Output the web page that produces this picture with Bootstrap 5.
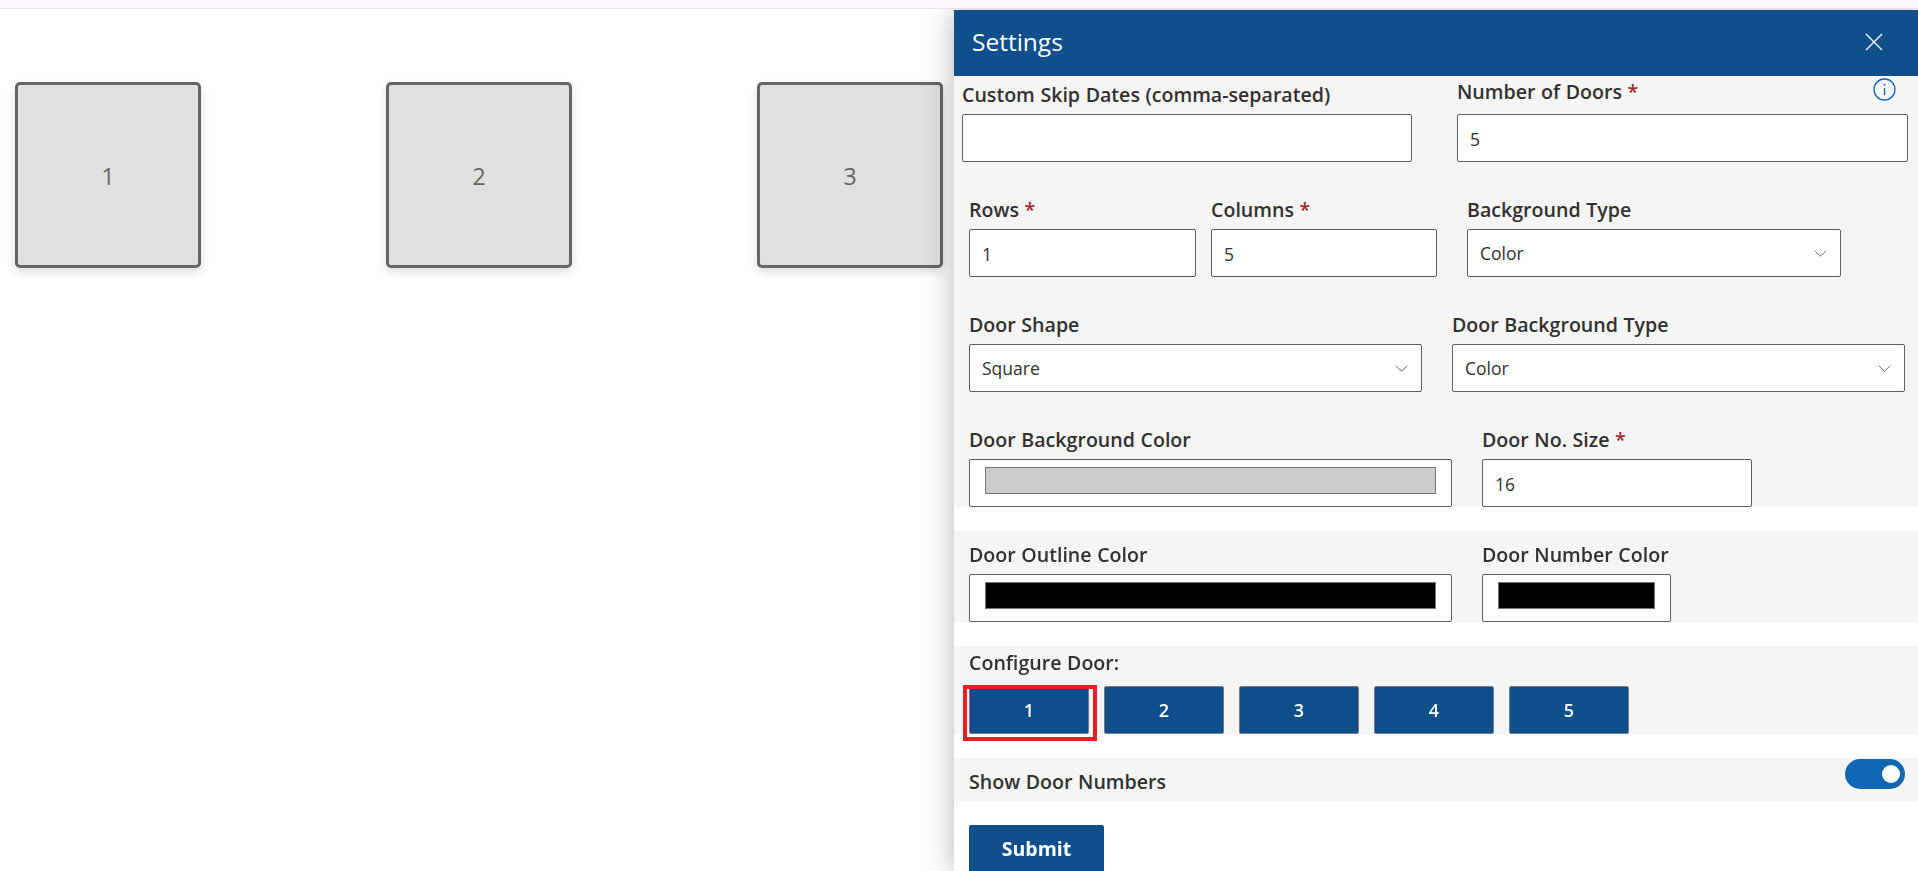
<!DOCTYPE html>
<html lang="en">
<head>
  <meta charset="UTF-8" />
  <meta name="viewport" content="width=device-width, initial-scale=1.0">
  <title>Settings</title>
  <link href="https://cdn.jsdelivr.net/npm/bootstrap@5.3.3/dist/css/bootstrap.min.css" rel="stylesheet">
  <style>
    html, body { height: 100%; }
    body { font-family: "Open Sans", "Noto Sans", sans-serif; color: #323130; background: #fff; overflow: hidden; }
    .top-strip { height: 9px; background: #fdf6fd; border-bottom: 1px solid #e9e1eb; position: relative; z-index: 3; }
    .door-stage { padding: 73px 0 0 15px; gap: 185px; }
    .door-tile { width: 186px; height: 186px; background: #e0e0e0; border: 3px solid #666; border-radius: 5px; box-shadow: 0 4px 10px rgba(0,0,0,.14); color: #666; font-size: 23px; font-weight: 400; padding-top: 2px; }

    .settings-panel { position: fixed; top: 10px; left: 954px; right: 0; bottom: 0; background: #fff; box-shadow: 0 0 28px rgba(0,0,0,.3); z-index: 2; overflow: hidden; }
    .panel-head { height: 66px; background: #0f4f8b; color: #fff; padding: 0 35px 2px 18px; }
    .panel-title { font-size: 24.5px; font-weight: 400; margin: 0; }
    .close-x { width: 18px; height: 18px; background: none; border: 0; padding: 0; line-height: 0; }

    .gray-block { background: #f5f5f5; }
    .block-main { height: 431px; padding-top: 4px; }
    .block-outline { height: 91px; margin-top: 24px; padding-top: 12px; }
    .block-config { height: 88px; margin-top: 24px; padding-top: 5px; }
    .block-toggle { height: 43px; margin-top: 24px; padding: 12px 0 0; position: relative; }

    .field-row { display: flex; padding-left: 15px; margin-bottom: 36px; }
    .field-row.first-row { padding-left: 8px; gap: 45px; }
    .gap-b { gap: 30px; }
    .field-label { display: block; height: 24px; line-height: 23px; margin-bottom: 7px; font-size: 19.6px; font-weight: 550; color: #323130; white-space: nowrap; word-spacing: .5px; }
    .req { color: #a4262c; }
    .label-low { padding-top: 3px; height: 27px; }
    .label-wide { margin-bottom: 10px; }
    .config-label { margin-bottom: 11px; }
    .info-mark { width: 23px; height: 23px; margin-right: 12px; margin-top: -2px; }
    .column-field { margin-left: 15px; }
    .type-field { margin-left: 30px; }

    .w-450 { width: 450px; }
    .w-451 { width: 451px; }
    .w-227 { width: 227px; }
    .w-226 { width: 226px; }
    .w-374 { width: 374px; }
    .w-453 { width: 453px; }
    .w-483 { width: 483px; }
    .w-270 { width: 270px; }
    .w-189 { width: 189px; }

    .form-control, .form-select { height: 48px; border: 1px solid #605e5c; border-radius: 2px; font-size: 17.5px; color: #323130; padding: 0 12px; background-color: #fff; }
    .form-control { padding-top: 2px; }
    .form-select { background-image: url("data:image/svg+xml,%3csvg xmlns='http://www.w3.org/2000/svg' viewBox='0 0 16 16'%3e%3cpath fill='none' stroke='%23605e5c' stroke-width='1' d='M2 5l6 6 6-6'/%3e%3c/svg%3e"); background-size: 15px 15px; background-position: right 12px center; }
    .form-control-color { height: 48px; width: 100%; max-width: none; padding: 7px 15px 12px; }
    .form-control-color::-webkit-color-swatch-wrapper { padding: 0; }
    .form-control-color::-webkit-color-swatch { border: 1px solid #767676; border-radius: 0; }

    .door-pick { width: 120px; height: 48px; background: #0f4f8b; border: 1px solid #7b7b7b; border-radius: 2px; color: #fff; font-size: 18px; font-weight: 600; padding: 0; }
    .door-pick:hover { background: #0f4f8b; color: #fff; border-color: #7b7b7b; }
    .pick-row { display: flex; gap: 15px; padding-left: 15px; position: relative; }
    .pick-mark { position: absolute; left: 9px; top: -1px; width: 134px; height: 56px; border: 4px solid #ed1c24; pointer-events: none; }

    .door-switch.form-check-input { position: absolute; top: 1px; left: 891px; margin: 0; width: 60px; height: 30px; border: 0; border-radius: 15px; background-color: #1267b3; background-size: 24px 24px; background-position: right 2px center; background-image: url("data:image/svg+xml,%3csvg xmlns='http://www.w3.org/2000/svg' viewBox='-4 -4 8 8'%3e%3ccircle r='3' fill='%23fff'/%3e%3c/svg%3e"); }
    .door-switch.form-check-input:checked { background-color: #1267b3; background-position: right 2px center; }
    .submit-btn { width: 135px; height: 48px; margin: 24px 0 0 15px; background: #0f4f8b; border: 0; border-radius: 2px; color: #fff; font-size: 19.5px; font-weight: 700; padding: 0; }
    .submit-btn:hover { background: #0f4f8b; color: #fff; }
    .pl-field { padding-left: 15px; }
  </style>
</head>
<body>

  <div class="top-strip"></div>

  <div class="door-stage d-flex">
    <div class="door-tile d-flex align-items-center justify-content-center">1</div>
    <div class="door-tile d-flex align-items-center justify-content-center">2</div>
    <div class="door-tile d-flex align-items-center justify-content-center">3</div>
  </div>

  <div class="settings-panel">
    <div class="panel-head d-flex align-items-center justify-content-between">
      <h2 class="panel-title">Settings</h2>
      <button type="button" class="close-x" aria-label="Close">
        <svg width="18" height="18" viewBox="0 0 18 18"><path d="M1 1l16 16M17 1L1 17" stroke="#fff" stroke-width="1.4" fill="none"/></svg>
      </button>
    </div>

    <div class="gray-block block-main">
      <div class="field-row first-row">
        <div class="w-450">
          <label class="field-label label-low" for="skipDates">Custom Skip Dates (comma-separated)</label>
          <input id="skipDates" type="text" class="form-control">
        </div>
        <div class="w-451">
          <div class="d-flex justify-content-between align-items-start">
            <label class="field-label label-wide" for="doorCount">Number of Doors <span class="req">*</span></label>
            <svg class="info-mark" viewBox="0 0 23 23"><circle cx="11.5" cy="11.5" r="10.5" fill="none" stroke="#1267b3" stroke-width="1.3"/><path d="M11.5 10v7" stroke="#1267b3" stroke-width="1.3"/><circle cx="11.5" cy="6.8" r="1" fill="#1267b3"/></svg>
          </div>
          <input id="doorCount" type="text" class="form-control" value="5">
        </div>
      </div>

      <div class="field-row">
        <div class="w-227">
          <label class="field-label" for="rowCount">Rows <span class="req">*</span></label>
          <input id="rowCount" type="text" class="form-control" value="1">
        </div>
        <div class="w-226 column-field">
          <label class="field-label" for="colCount">Columns <span class="req">*</span></label>
          <input id="colCount" type="text" class="form-control" value="5">
        </div>
        <div class="w-374 type-field">
          <label class="field-label" for="bgType">Background Type</label>
          <select id="bgType" class="form-select"><option>Color</option></select>
        </div>
      </div>

      <div class="field-row gap-b">
        <div class="w-453">
          <label class="field-label" for="doorShape">Door Shape</label>
          <select id="doorShape" class="form-select"><option>Square</option></select>
        </div>
        <div class="w-453">
          <label class="field-label" for="doorBgType">Door Background Type</label>
          <select id="doorBgType" class="form-select"><option>Color</option></select>
        </div>
      </div>

      <div class="field-row gap-b">
        <div class="w-483">
          <label class="field-label" for="doorBgColor">Door Background Color</label>
          <input id="doorBgColor" type="color" class="form-control form-control-color" value="#cccccc">
        </div>
        <div class="w-270">
          <label class="field-label" for="doorNoSize">Door No. Size <span class="req">*</span></label>
          <input id="doorNoSize" type="text" class="form-control" value="16">
        </div>
      </div>
    </div>

    <div class="gray-block block-outline">
      <div class="field-row gap-b">
        <div class="w-483">
          <label class="field-label" for="doorOutline">Door Outline Color</label>
          <input id="doorOutline" type="color" class="form-control form-control-color" value="#000000">
        </div>
        <div class="w-189">
          <label class="field-label" for="doorNumColor">Door Number Color</label>
          <input id="doorNumColor" type="color" class="form-control form-control-color" value="#000000">
        </div>
      </div>
    </div>

    <div class="gray-block block-config">
      <div class="field-label pl-field config-label">Configure Door:</div>
      <div class="pick-row">
        <button type="button" class="btn door-pick">1</button>
        <button type="button" class="btn door-pick">2</button>
        <button type="button" class="btn door-pick">3</button>
        <button type="button" class="btn door-pick">4</button>
        <button type="button" class="btn door-pick">5</button>
        <div class="pick-mark"></div>
      </div>
    </div>

    <div class="gray-block block-toggle form-switch">
      <label class="field-label pl-field toggle-label" for="showNumbers">Show Door Numbers</label>
      <input id="showNumbers" class="form-check-input door-switch" type="checkbox" role="switch" checked>
    </div>

    <button type="button" class="btn submit-btn d-block">Submit</button>
  </div>

  <script src="https://cdn.jsdelivr.net/npm/bootstrap@5.3.3/dist/js/bootstrap.bundle.min.js"></script>
</body>
</html>
